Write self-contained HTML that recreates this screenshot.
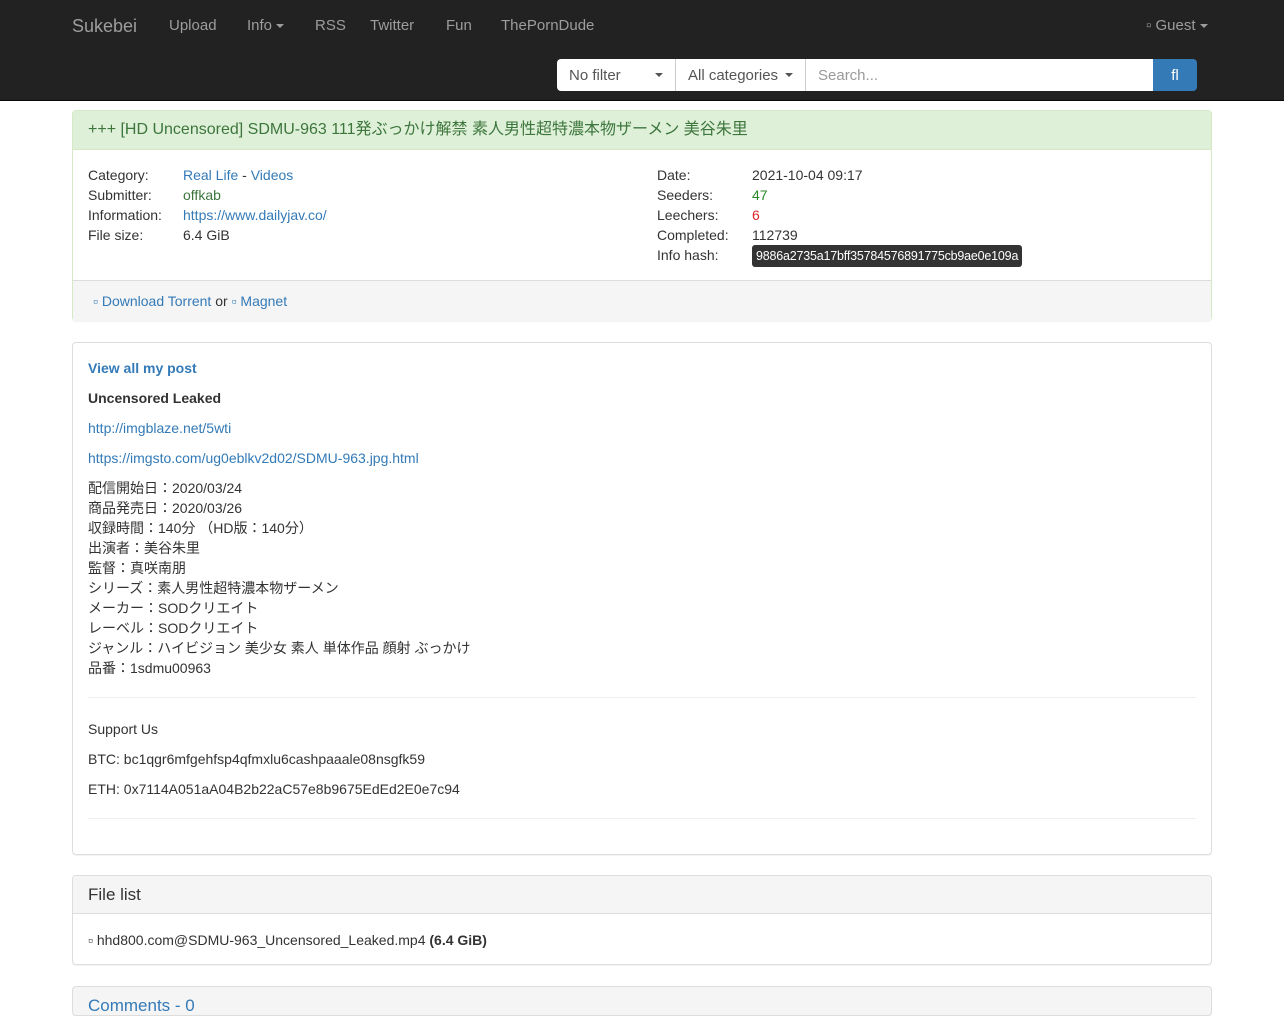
<!DOCTYPE html>
<html><head><meta charset="utf-8">
<style>
*{box-sizing:border-box}
body{margin:0;background:#fff;font-family:"Liberation Sans","Noto Sans CJK JP",sans-serif;font-size:14px;color:#333;line-height:20px;overflow:hidden;height:1002px}
a{color:#337ab7;text-decoration:none}
.nav{position:absolute;left:0;top:0;width:1284px;height:101px;background:#222;border-bottom:1px solid #080808}
.nav .t{position:absolute;top:16px;color:#9d9d9d;font-size:15px}
.brand{font-size:18px!important;top:16px!important}
.caret{display:inline-block;width:0;height:0;border-left:4px solid transparent;border-right:4px solid transparent;border-top:4px solid #9d9d9d;vertical-align:middle;margin-left:4px}
.sel{position:absolute;top:59px;height:32px;background:#fff;color:#555;padding:7px 12px;font-size:15px}
.sel .caret{border-top-color:#555;position:absolute;right:12px;top:14px}
.panel{position:absolute;left:72px;width:1140px;border:1px solid #ddd;border-radius:4px;background:#fff;box-shadow:0 1px 1px rgba(0,0,0,.05)}
.row{position:absolute;font-size:14px}
.p{position:absolute;left:88px;font-size:14px}
</style></head><body>
<div class="nav">
<span class="t brand" style="left:72px">Sukebei</span>
<span class="t" style="left:169px">Upload</span>
<span class="t" style="left:247px">Info<span class="caret"></span></span>
<span class="t" style="left:315px">RSS</span>
<span class="t" style="left:370px">Twitter</span>
<span class="t" style="left:446px">Fun</span>
<span class="t" style="left:501px">ThePornDude</span>
<span class="t" style="left:1146px">&#9643; Guest<span class="caret"></span></span>
<div class="sel" style="left:557px;width:119px;border-radius:4px 0 0 4px;border-right:1px solid #ccc">No filter<span class="caret"></span></div>
<div class="sel" style="left:676px;width:130px;border-right:1px solid #ccc">All categories<span class="caret"></span></div>
<div class="sel" style="left:806px;width:348px;color:#999">Search...</div>
<div class="sel" style="left:1153px;width:44px;background:#337ab7;color:#fff;border-radius:0 4px 4px 0;text-align:center;padding:7px 0">&#64258;</div>
</div>

<div class="panel" style="top:110px;height:211px;border-color:#d6e9c6">
<div style="background:#dff0d8;color:#3c763d;height:39px;padding:9px 15px;font-size:16px;border-bottom:1px solid #d6e9c6;border-radius:3px 3px 0 0">+++ [HD Uncensored] SDMU-963 111発ぶっかけ解禁 素人男性超特濃本物ザーメン 美谷朱里</div>
<div class="row" style="left:15px;top:54px">
<div>Category:</div><div>Submitter:</div><div>Information:</div><div>File size:</div></div>
<div class="row" style="left:110px;top:54px">
<div><a href="#">Real Life</a> - <a href="#">Videos</a></div><div><a href="#" style="color:#3c763d">offkab</a></div><div><a href="#">https://www.dailyjav.co/</a></div><div>6.4 GiB</div></div>
<div class="row" style="left:584px;top:54px">
<div>Date:</div><div>Seeders:</div><div>Leechers:</div><div>Completed:</div><div>Info hash:</div></div>
<div class="row" style="left:679px;top:54px">
<div>2021-10-04 09:17</div><div style="color:#2a8a2a">47</div><div style="color:#d9272e">6</div><div>112739</div>
<div><span style="display:inline-block;background:#333;color:#fff;font-size:12.5px;line-height:16px;padding:3px 4px;border-radius:3px;letter-spacing:-0.2px">9886a2735a17bff35784576891775cb9ae0e109a</span></div></div>
<div style="position:absolute;left:0;right:0;top:169px;height:41px;background:#f5f5f5;border-top:1px solid #ddd;padding:10px 20px;font-size:14px"><a href="#">&#9643; Download Torrent</a> or <a href="#">&#9643; Magnet</a></div>
</div>

<div class="panel" style="top:342px;height:513px"></div>
<a class="p" href="#" style="top:358px;font-weight:bold">View all my post</a>
<div class="p" style="top:388px;font-weight:bold">Uncensored Leaked</div>
<a class="p" href="#" style="top:418px">http://imgblaze.net/5wti</a>
<a class="p" href="#" style="top:448px">https://imgsto.com/ug0eblkv2d02/SDMU-963.jpg.html</a>
<div class="p" style="top:478px">配信開始日：2020/03/24<br>商品発売日：2020/03/26<br>収録時間：140分 （HD版：140分）<br>出演者：美谷朱里<br>監督：真咲南朋<br>シリーズ：素人男性超特濃本物ザーメン<br>メーカー：SODクリエイト<br>レーベル：SODクリエイト<br>ジャンル：ハイビジョン 美少女 素人 単体作品 顔射 ぶっかけ<br>品番：1sdmu00963</div>
<div style="position:absolute;left:88px;width:1108px;top:697px;border-top:1px solid #eee"></div>
<div class="p" style="top:719px">Support Us</div>
<div class="p" style="top:749px">BTC: bc1qgr6mfgehfsp4qfmxlu6cashpaaale08nsgfk59</div>
<div class="p" style="top:779px">ETH: 0x7114A051aA04B2b22aC57e8b9675EdEd2E0e7c94</div>
<div style="position:absolute;left:88px;width:1108px;top:818px;border-top:1px solid #eee"></div>

<div class="panel" style="top:875px;height:90px">
<div style="background:#f5f5f5;height:38px;border-bottom:1px solid #ddd;padding:9px 15px;font-size:17px;border-radius:3px 3px 0 0">File list</div>
<div style="padding:16px 15px;font-size:14px">&#9643; hhd800.com@SDMU-963_Uncensored_Leaked.mp4 <b>(6.4 GiB)</b></div>
</div>
<div class="panel" style="top:986px;height:30px;background:#f5f5f5;padding:9px 15px;font-size:17px;overflow:hidden"><a href="#">Comments - 0</a></div>
</body></html>
